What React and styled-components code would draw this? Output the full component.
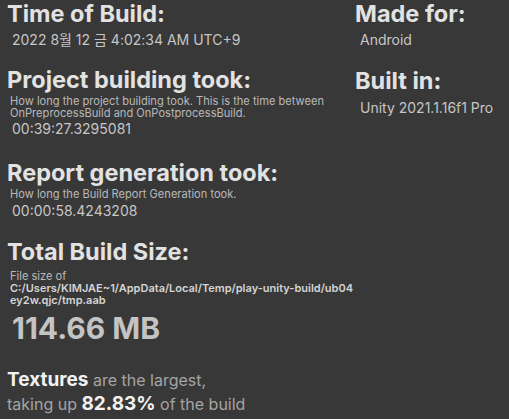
import React from "react";
import styled, { createGlobalStyle } from "styled-components";

const GlobalStyle = createGlobalStyle`
  html, body {
    margin: 0;
    padding: 0;
    background: #383838;
  }
  body {
    font-family: Inter, "Noto Sans CJK KR", "Noto Sans", sans-serif;
    color: #d2d2d2;
  }
`;

const Page = styled.div`
  display: grid;
  grid-template-columns: 348px 1fr;
  width: 509px;
  height: 419px;
  overflow: hidden;
  padding: 0 0 0 7px;
  box-sizing: border-box;
`;

const Column = styled.div`
  display: flex;
  flex-direction: column;
`;

const Section = styled.div`
  display: flex;
  flex-direction: column;
  margin-bottom: ${(p) => p.$gap || 0}px;
`;

const Heading = styled.h2`
  margin: 0;
  font-size: 23.5px;
  line-height: 28px;
  font-weight: 700;
  color: #e2e2e2;
`;

const Value = styled.div`
  margin: ${(p) => p.$top ?? 3}px 0 0 5px;
  font-size: 14px;
  line-height: 18px;
  color: #c6c6c6;
`;

const Desc = styled.div`
  margin: ${(p) => p.$top ?? 2}px 0 0 3px;
  font-size: 11.1px;
  line-height: ${(p) => p.$lh || 11.5}px;
  color: #b8b8b8;
  white-space: nowrap;
`;

const Path = styled.div`
  margin: 0 0 0 3px;
  font-size: 11px;
  line-height: 12px;
  font-weight: 600;
  color: #d4d4d4;
  word-break: break-all;
  width: 345px;
`;

const BigSize = styled.div`
  margin: 4px 0 0 5px;
  font-size: 30px;
  line-height: 36px;
  font-weight: 700;
  color: #c4c4c4;
`;

const Summary = styled.div`
  margin-top: 22px;
  font-size: 16px;
  line-height: 24px;
  color: #a4a4a4;
  white-space: nowrap;
`;

const Strong = styled.span`
  font-weight: 700;
  font-size: 19px;
  color: #f2f2f2;
`;

export default function App() {
  return (
    <>
      <GlobalStyle />
      <Page>
        <Column>
          <Section $gap={17}>
            <Heading>Time of Build:</Heading>
            <Value>2022 8월 12 금 4:02:34 AM UTC+9</Value>
          </Section>
          <Section $gap={21}>
            <Heading>Project building took:</Heading>
            <Desc>
              How long the project building took. This is the time between
              <br />
              OnPreprocessBuild and OnPostprocessBuild.
            </Desc>
            <Value $top={1}>00:39:27.3295081</Value>
          </Section>
          <Section $gap={18}>
            <Heading>Report generation took:</Heading>
            <Desc>How long the Build Report Generation took.</Desc>
            <Value $top={1}>00:00:58.4243208</Value>
          </Section>
          <Section>
            <Heading>Total Build Size:</Heading>
            <Desc $top={4} $lh={12}>File size of</Desc>
            <Path>C:/Users/KIMJAE~1/AppData/Local/Temp/play-unity-build/ub04ey2w.qjc/tmp.aab</Path>
            <BigSize>114.66 MB</BigSize>
          </Section>
          <Summary>
            <Strong>Textures</Strong> are the largest,
            <br />
            taking up <Strong>82.83%</Strong> of the build
          </Summary>
        </Column>
        <Column>
          <Section $gap={18}>
            <Heading>Made for:</Heading>
            <Value>Android</Value>
          </Section>
          <Section>
            <Heading>Built in:</Heading>
            <Value $top={4}>Unity 2021.1.16f1 Pro</Value>
          </Section>
        </Column>
      </Page>
    </>
  );
}
